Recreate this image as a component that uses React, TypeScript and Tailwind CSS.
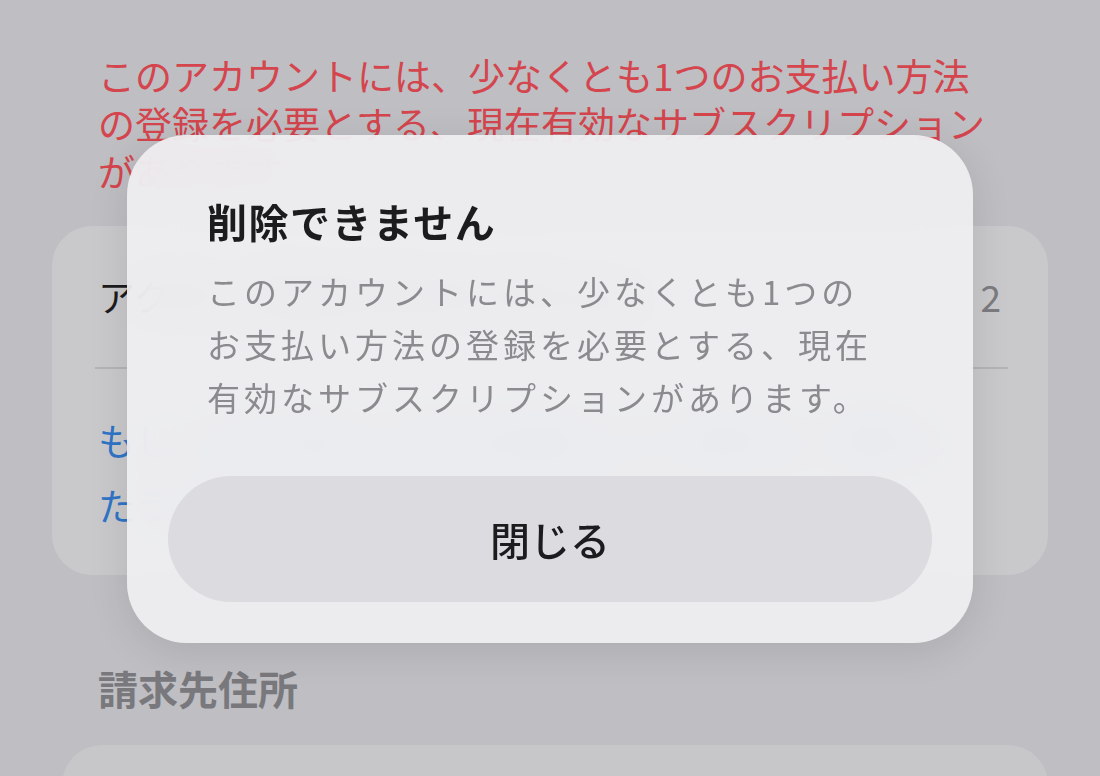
const FONT = { fontFamily: '"Noto Sans CJK JP", "Noto Sans", sans-serif' };

function BackgroundPage() {
  return (
    <div className="min-h-[776px] bg-[#bebec3] px-[52px] pt-[51px]">
      <p className="pl-[46px] text-[37px] leading-[48px] text-[#d4454d] whitespace-nowrap">
        このアカウントには、少なくとも1つのお支払い方法
        <br />
        の登録を必要とする、現在有効なサブスクリプション
        <br />
        があります。
      </p>

      <div className="mt-[31px] rounded-[40px] bg-[#c9c9cc]">
        <div className="flex h-[141px] items-center justify-between px-[46px] text-[37px]">
          <span className="text-[#1c1c1e]">アクティブなサブスクリプション</span>
          <span className="pr-[1px] text-[#7b7b80]">2</span>
        </div>
        <div className="ml-[43px] mr-[40px] h-[2px] bg-[#b4b4b8]" />
        <p className="px-[46px] pt-[39px] pb-[37px] text-[37px] leading-[65px] text-[#2f74c6] whitespace-nowrap">
          もしこのお支払い方法を削除したい場合は、解約し
          <br />
          たうえでもう一度お試しください。
        </p>
      </div>

      <h3 className="mt-[89px] pl-[46px] text-[40px] leading-[48px] font-semibold text-[#78787d]">
        請求先住所
      </h3>

      <div className="mt-[33px] ml-[10px] h-[120px] rounded-[40px] bg-[#c7c7ca]" />
    </div>
  );
}

function Alert() {
  return (
    <div className="absolute left-[127px] top-[135px] w-[846px] h-[508px] rounded-[60px] bg-[#f1f1f3]/90 backdrop-blur-xl shadow-[0_8px_40px_rgba(0,0,0,0.10)] flex flex-col px-[41px] pt-[62px] pb-[41px]">
      <h2 className="pl-[39px] text-[40px] leading-[48px] font-bold tracking-[1.5px] text-[#1c1c1e]">
        削除できません
      </h2>
      <p className="mt-[20px] pl-[39px] text-[33px] leading-[53px] tracking-[4px] text-[#8a8a8f] whitespace-nowrap">
        このアカウントには、少なくとも1つの
        <br />
        お支払い方法の登録を必要とする、現在
        <br />
        有効なサブスクリプションがあります。
      </p>
      <button className="mt-auto h-[126px] w-full rounded-full bg-[#dcdce0] text-[40px] font-medium text-[#1c1c1e]">
        閉じる
      </button>
    </div>
  );
}

export default function App() {
  return (
    <div className="relative h-[776px] w-[1100px] overflow-hidden" style={FONT}>
      <BackgroundPage />
      <Alert />
    </div>
  );
}
